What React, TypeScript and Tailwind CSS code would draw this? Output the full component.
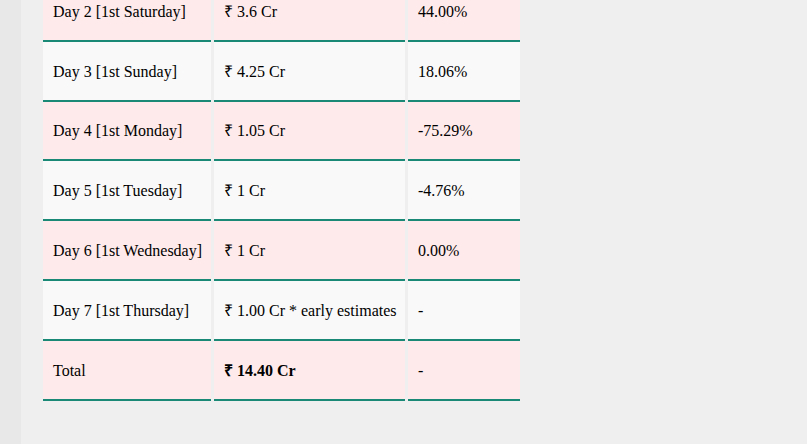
const rows = [
  { day: "Day 2 [1st Saturday]", amount: "₹ 3.6 Cr", change: "44.00%" },
  { day: "Day 3 [1st Sunday]", amount: "₹ 4.25 Cr", change: "18.06%" },
  { day: "Day 4 [1st Monday]", amount: "₹ 1.05 Cr", change: "-75.29%" },
  { day: "Day 5 [1st Tuesday]", amount: "₹ 1 Cr", change: "-4.76%" },
  { day: "Day 6 [1st Wednesday]", amount: "₹ 1 Cr", change: "0.00%" },
  { day: "Day 7 [1st Thursday]", amount: "₹ 1.00 Cr * early estimates", change: "-" },
];

function Cell({ children, bg, bold, short }: { children: React.ReactNode; bg: string; bold?: boolean; short?: boolean }) {
  return (
    <div
      className={`flex items-center border-b-2 border-solid border-b-[#1a8a76] pl-[10px] pt-[1px] ${short ? "h-[59px]" : "h-[60px]"} ${bg} ${bold ? "font-bold" : ""}`}
    >
      {children}
    </div>
  );
}

export default function App() {
  return (
    <div className="flex h-[444px] w-[807px] overflow-hidden bg-[#efefef] font-['Liberation_Serif',serif] text-[16px] text-black">
      <div className="w-[21px] shrink-0 bg-[#e8e8e8]" />
      <div className="pl-[22px]">
        <div className="-mt-[18px] grid grid-cols-[168px_191px_112px] gap-x-[3px]">
          {rows.map((r, i) => {
            const bg = i % 2 === 0 ? "bg-[#feeaea]" : "bg-[#f9f9f9]";
            const short = i === 2;
            return [
              <Cell key={r.day + "a"} bg={bg} short={short}>{r.day}</Cell>,
              <Cell key={r.day + "b"} bg={bg} short={short}>{r.amount}</Cell>,
              <Cell key={r.day + "c"} bg={bg} short={short}>{r.change}</Cell>,
            ];
          })}
          <Cell bg="bg-[#feeaea]">Total</Cell>
          <Cell bg="bg-[#feeaea]" bold>₹ 14.40 Cr</Cell>
          <Cell bg="bg-[#feeaea]">-</Cell>
        </div>
      </div>
    </div>
  );
}
